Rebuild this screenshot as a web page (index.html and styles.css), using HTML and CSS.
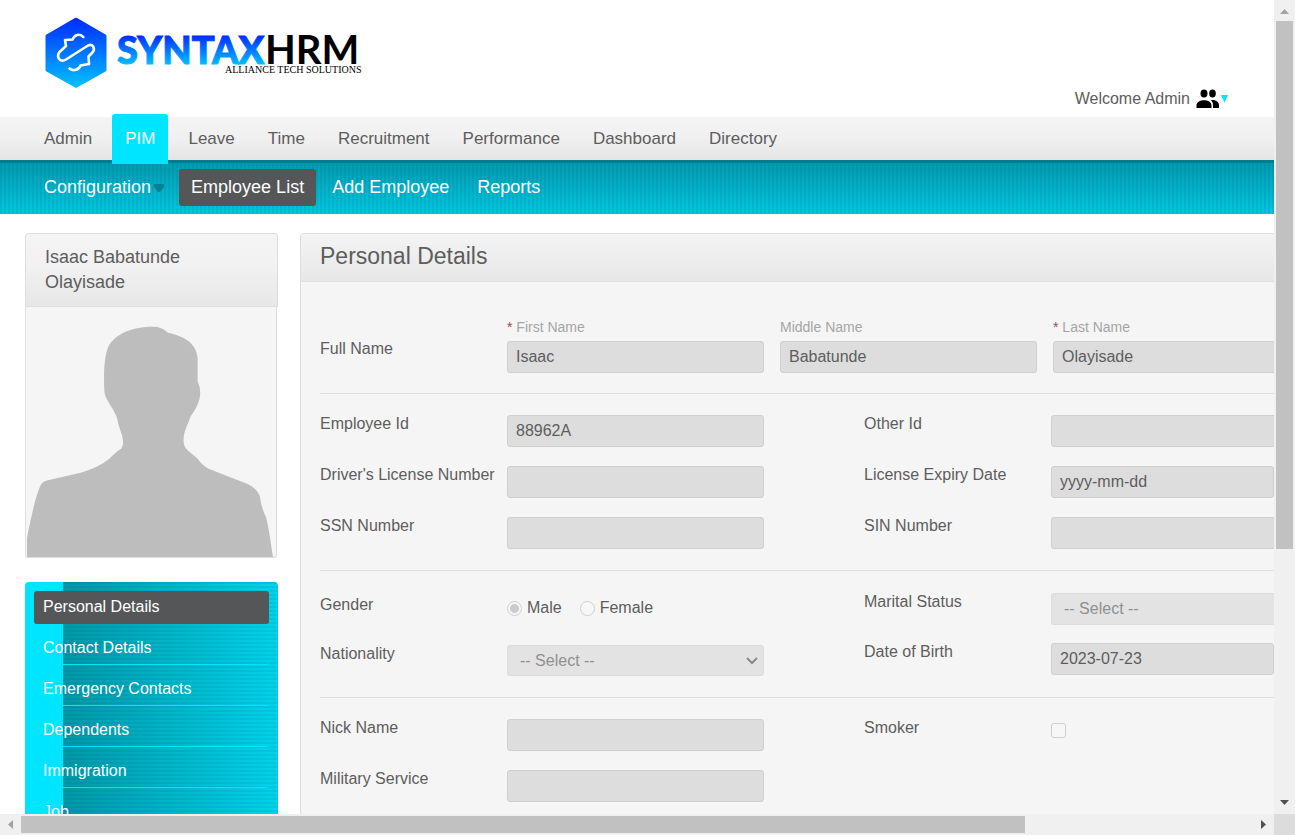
FILE: index.html
```html
<!DOCTYPE html>
<html lang="en">
<head>
<meta charset="utf-8">
<title>SyntaxHRM - Personal Details</title>
<link rel="stylesheet" href="styles.css">
</head>
<body>
<div class="window">
  <div class="page">
    <header class="banner">
      <a class="logo" href="#" aria-label="SyntaxHRM">
        <svg width="340" height="80" viewBox="0 0 340 80">
          <defs>
            <linearGradient id="hex" x1="0" y1="0" x2="0" y2="1"><stop offset="0" stop-color="#0028ff"/><stop offset="1" stop-color="#00c3ff"/></linearGradient>
            <linearGradient id="word" gradientUnits="userSpaceOnUse" x1="0" y1="22" x2="0" y2="52"><stop offset="0" stop-color="#0028ff"/><stop offset="0.2" stop-color="#0048ff"/><stop offset="1" stop-color="#00c3ff"/></linearGradient>
          </defs>
          <path d="M31 5Q32 4.500 33 5L61.500 21.500Q62.500 22 62.500 23V57Q62.500 58 61.500 58.500L33 74.500Q32 75 31 74.500L2.500 58.500Q1.500 58 1.500 57V23Q1.500 22 2.500 21.500Z" fill="url(#hex)"/>
          <path d="M39.300 24C36 20 30 22 28.700 26.500L21 27L22 33L15.500 39C12 44 16 50 22 46.500L44 32.500C49 30 52 36 48 40L44.500 43.500L45 51L36.500 52.500C35 57 29 58.500 25.500 55.500" fill="none" stroke="#fff" stroke-width="2.600" stroke-linecap="round" stroke-linejoin="round"/>
          <text class="logo-syntax" x="73" y="51" fill="url(#word)" stroke="url(#word)">SYNTAX</text>
          <text class="logo-hrm" x="221" y="51">HRM</text>
          <text class="logo-tag" x="181" y="60">ALLIANCE TECH SOLUTIONS</text>
        </svg>
      </a>
      <button class="welcome" type="button">
        <span>Welcome Admin</span>
        <svg width="33" height="20" viewBox="0 0 33 20">
          <ellipse cx="8" cy="4.500" rx="3.500" ry="4"/><ellipse cx="16.500" cy="4.500" rx="3.300" ry="4"/>
          <path d="M0.500 19V16.500C0.500 9.500 15.500 9.500 15.500 16.500V19ZM17 19V16C17 13.500 16 12 14.500 11C19 10.500 23 12.500 23 16V19Z"/>
          <path d="M25 6H32L28.500 13.500Z" fill="#00e5ff"/>
        </svg>
      </button>
    </header>
    <nav class="main-nav">
      <a href="#">Admin</a><a class="current" href="#">PIM</a><a href="#">Leave</a><a href="#">Time</a><a href="#">Recruitment</a><a href="#">Performance</a><a href="#">Dashboard</a><a href="#">Directory</a>
    </nav>
    <nav class="sub-nav">
      <a class="has-menu" href="#">Configuration<svg width="10" height="8" viewBox="0 0 10 8"><path d="M0 0H10V3L6 8H4L0 3Z" fill="#008392"/></svg></a>
      <a class="current" href="#">Employee List</a><a href="#">Add Employee</a><a href="#">Reports</a>
    </nav>
    <div class="content">
      <aside class="sidebar">
        <section class="profile">
          <h2>Isaac Babatunde Olayisade</h2>
          <div class="photo">
            <svg viewBox="0 0 250 250" role="img" aria-label="Employee photo">
              <path d="M0 250V231C3 215 9 187 14 177Q16 174 20 173L54 165Q72 160 83 151Q91 143 95 141Q98 138 96 128L92 116Q91 107 84 97Q78 88 78 83C77 64 78 47 82 38C89 25 106 18 127 18Q136 18 142 24C156 27 171 33 172 50V73Q176 81 174 90Q172 99 165 108C161 120 157 124 158 135C159 142 165 144 172 151Q177 158 183 161L216 174Q232 179 235 190Q236 200 241 210C244 222 246 238 248 250Z" fill="#bdbdbd"/>
            </svg>
          </div>
        </section>
        <nav class="side-menu">
          <a class="current" href="#">Personal Details</a>
          <a href="#">Contact Details</a>
          <a href="#">Emergency Contacts</a>
          <a href="#">Dependents</a>
          <a href="#">Immigration</a>
          <a href="#">Job</a>
          <a href="#">Salary</a>
        </nav>
      </aside>
      <main class="panel">
        <h1>Personal Details</h1>
        <form>
          <div class="group names">
            <span class="label">Full Name</span>
            <div class="name"><label for="first"><em>*</em> First Name</label><input id="first" type="text" value="Isaac" disabled></div>
            <div class="name"><label for="middle">Middle Name</label><input id="middle" type="text" value="Babatunde" disabled></div>
            <div class="name"><label for="last"><em>*</em> Last Name</label><input id="last" type="text" value="Olayisade" disabled></div>
          </div>
          <div class="group">
            <div class="col">
              <div class="row"><label for="eid">Employee Id</label><input id="eid" type="text" value="88962A" disabled></div>
              <div class="row"><label for="dln">Driver's License Number</label><input id="dln" type="text" disabled></div>
              <div class="row"><label for="ssn">SSN Number</label><input id="ssn" type="text" disabled></div>
            </div>
            <div class="col">
              <div class="row"><label for="oid">Other Id</label><input id="oid" type="text" disabled></div>
              <div class="row"><label for="exp">License Expiry Date</label><input id="exp" class="date" type="text" value="yyyy-mm-dd" disabled></div>
              <div class="row"><label for="sin">SIN Number</label><input id="sin" type="text" disabled></div>
            </div>
          </div>
          <div class="group personal">
            <div class="col">
              <div class="row gender"><span class="label">Gender</span>
                <div class="choices">
                  <input id="male" type="radio" name="gender" checked disabled><label for="male">Male</label>
                  <input id="female" type="radio" name="gender" disabled><label for="female">Female</label>
                </div>
              </div>
              <div class="row"><label for="nat">Nationality</label>
                <div class="select"><select id="nat" disabled><option>-- Select --</option></select><svg width="12" height="8" viewBox="0 0 12 8"><path d="M1 1L6 6L11 1" fill="none" stroke="#8b8b8b" stroke-width="2"/></svg></div>
              </div>
            </div>
            <div class="col">
              <div class="row"><label for="mar">Marital Status</label>
                <div class="select"><select id="mar" disabled><option>-- Select --</option></select><svg width="12" height="8" viewBox="0 0 12 8"><path d="M1 1L6 6L11 1" fill="none" stroke="#8b8b8b" stroke-width="2"/></svg></div>
              </div>
              <div class="row"><label for="dob">Date of Birth</label><input id="dob" class="date" type="text" value="2023-07-23" disabled></div>
            </div>
          </div>
          <div class="group">
            <div class="col">
              <div class="row"><label for="nick">Nick Name</label><input id="nick" type="text" disabled></div>
              <div class="row"><label for="mil">Military Service</label><input id="mil" type="text" disabled></div>
            </div>
            <div class="col">
              <div class="row"><label for="smoker">Smoker</label><input id="smoker" type="checkbox" disabled></div>
            </div>
          </div>
        </form>
      </main>
    </div>
  </div>
  <div class="scroll vertical">
    <svg viewBox="0 0 21 21"><path d="M6 14L10.500 9L15 14Z" fill="#a3a3a3"/></svg>
    <div class="track"><div class="thumb"></div></div>
    <svg viewBox="0 0 21 21"><path d="M6 7H15L10.500 12Z" fill="#505050"/></svg>
  </div>
  <div class="scroll horizontal">
    <svg viewBox="0 0 21 21"><path d="M13 6V15L8 10.500Z" fill="#a3a3a3"/></svg>
    <div class="track"><div class="thumb"></div></div>
    <svg viewBox="0 0 21 21"><path d="M8 6V15L13 10.500Z" fill="#505050"/></svg>
  </div>
  <div class="corner"></div>
</div>
</body>
</html>
```
FILE: styles.css
```css
* { box-sizing: border-box; }
body {
  margin: 0;
  background: #fff;
  color: #5d5d5d;
  font: 16px/18px "Liberation Sans", Arial, sans-serif;
}
a { color: inherit; text-decoration: none; }
svg { display: block; }
input, select, button { font: inherit; color: inherit; margin: 0; }

.window {
  display: grid;
  grid-template: minmax(0, 1fr) 21px / minmax(0, 1fr) 21px;
  height: 100vh;
}
.page { overflow: hidden; }

/* Banner */
.banner {
  display: flex;
  justify-content: space-between;
  align-items: flex-end;
  height: 117px;
  padding: 0 45px 0 44px;
}
.logo { align-self: flex-start; padding-top: 13px; }
.logo-syntax { font: 900 38px Lato, sans-serif; stroke-width: 1px; }
.logo-hrm { font: 700 40px Lato, sans-serif; fill: #000; }
.logo-tag { font: 400 10px "Liberation Serif", serif; fill: #000; }
.welcome {
  display: flex;
  align-items: center;
  gap: 6px;
  padding: 0 0 8px;
  border: 0;
  background: none;
}

/* Navigation */
.main-nav, .sub-nav {
  display: flex;
  padding-left: 32px;
}
.main-nav {
  gap: 7px;
  height: 43px;
  padding-left: 31px;
  background: linear-gradient(#f4f4f4, #f0f0f0 50%, #e5e5e5);
  font-size: 17px;
}
.main-nav a {
  height: 50px;
  margin-top: -3px;
  padding: 0 13px;
  line-height: 50px;
}
.main-nav .current {
  position: relative;
  z-index: 1;
  border-radius: 3px 3px 0 0;
  background: #00e5ff;
  color: #fff;
}
.sub-nav {
  gap: 4px;
  height: 54px;
  padding-top: 6px;
  border-top: 3px solid #007d90;
  background: repeating-linear-gradient(90deg, rgba(0, 70, 90, .1) 0 2px, transparent 2px 4px), linear-gradient(#009bb0, #00c8e2);
  color: #fff;
  font-size: 18px;
}
.sub-nav a {
  height: 37px;
  padding: 0 12px;
  border-radius: 3px;
  line-height: 36px;
}
.sub-nav .has-menu { display: flex; gap: 3px; padding-right: 11px; }
.has-menu svg { margin-top: 15px; }
.current { background: #555657; }

/* Content */
.content { display: flex; align-items: flex-start; gap: 22px; padding: 19px 25px; }
.sidebar { flex: none; width: 253px; }
.profile h2 {
  margin: 0;
  padding: 11px 60px 11px 19px;
  border: 1px solid #dedede;
  border-radius: 3px 3px 0 0;
  background: linear-gradient(#f4f4f4, #f1f1f1 45%, #e7e7e7);
  font-size: 18px;
  font-weight: 400;
  line-height: 25px;
}
.photo {
  margin-right: 1px;
  padding: 2px 1px 0;
  border: 1px solid #dedede;
  border-top: 0;
  border-radius: 0 0 3px 3px;
  background: #f5f5f5;
}
.photo svg { width: 100%; }
.side-menu {
  display: flex;
  flex-direction: column;
  gap: 8px;
  margin-top: 24px;
  padding: 9px;
  border-radius: 4px;
  background:
    linear-gradient(#00e5ff, #00e5ff) 0 0 / 38px 100% no-repeat,
    repeating-linear-gradient(rgba(0, 70, 90, .09) 0 2px, transparent 2px 4px),
    linear-gradient(90deg, #0097a7 38px, #00d3eb);
  color: #fff;
}
.side-menu a {
  height: 33px;
  padding: 0 9px;
  border-bottom: 1px solid #00e5ff;
  border-radius: 3px;
  line-height: 32px;
}
.side-menu .current { border-bottom-color: #555657; }

/* Form panel */
.panel {
  flex: none;
  border: 1px solid #dedede;
  border-radius: 3px;
  background: #f5f5f5;
}
.panel h1 {
  margin: 0;
  padding: 0 19px 2px;
  border-bottom: 1px solid #dedede;
  background: linear-gradient(#f4f4f4, #e7e7e7);
  font-size: 23px;
  font-weight: 400;
  line-height: 45px;
}
.panel form { padding: 15px 19px; }
.group {
  display: grid;
  grid-template-columns: 544px 544px;
  padding: 21px 0;
  border-top: 1px solid #dedede;
}
.group.names {
  grid-template-columns: 171px repeat(3, 257px);
  gap: 16px;
  padding-bottom: 20px;
  border: 0;
}
.names .label { padding-top: 22px; }
.name label { display: block; margin-bottom: 5px; color: #a5a5a5; font-size: 14px; }
.name em { color: #aa4455; font-style: normal; }
.name input { padding-bottom: 3px; }
.col { display: flex; flex-direction: column; gap: 19px; }
.row { display: grid; grid-template-columns: 187px 257px; }
input[type="text"], select {
  width: 100%;
  height: 32px;
  padding: 0 8px;
  border: 1px solid #cfcfcf;
  border-radius: 3px;
  background: #ddd;
  opacity: 1;
  -webkit-text-fill-color: #5d5d5d;
}
input.date { width: 223px; }
.select { display: grid; }
.select select {
  grid-area: 1 / 1;
  padding: 0 12px;
  border-color: #dcdcdc;
  background: #e3e3e3;
  appearance: none;
  -webkit-text-fill-color: #909090;
}
.select svg { grid-area: 1 / 1; place-self: center end; margin-right: 6px; }
.group.personal { padding: 22px 0 21px; }
.personal .col { gap: 18px; }
.personal .col:first-child { gap: 20px; }
.personal .col:first-child select { height: 31px; }
.row.gender { height: 32px; }
.gender .label { padding-top: 3px; }
.choices { display: flex; align-items: center; gap: 5px; padding-bottom: 2px; }
.choices label { margin-right: 13px; }
input[type="radio"], input[type="checkbox"] {
  appearance: none;
  width: 15px;
  height: 15px;
  border: 1px solid #cfcfcf;
  border-radius: 3px;
  background: #f7f7f7;
}
input[type="checkbox"] { margin-top: 4px; }
input[type="radio"] { border-radius: 50%; }
input[type="radio"]:checked { background: radial-gradient(circle, #cbcbcb 4px, #f7f7f7 5px); }

/* Window scroll bars */
.scroll { display: flex; background: #f0f0f0; }
.scroll svg { flex: none; width: 21px; height: 21px; }
.track { flex: 1; }
.thumb { background: #c1c1c1; }
.vertical { flex-direction: column; }
.vertical .thumb { height: 68.4%; margin: 0 2px; }
.horizontal .track { padding: 2px 0; }
.horizontal .thumb { width: 81.5%; height: 100%; }
.corner { background: #dcdcdc; }
```
